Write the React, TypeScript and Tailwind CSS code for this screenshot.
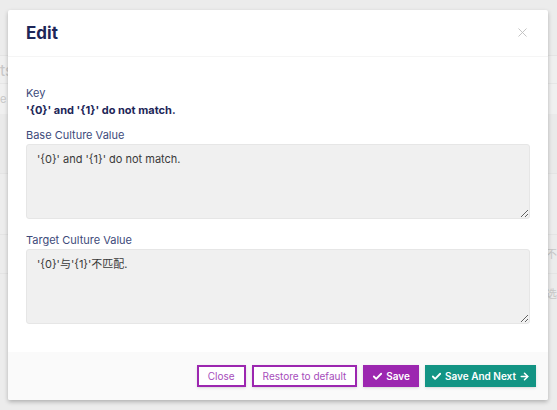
import { Check, ArrowRight, X } from "lucide-react";

const font = { fontFamily: "Inter, 'Noto Sans CJK SC', sans-serif" };

function Field({ label, value }: { label: string; value: string }) {
  return (
    <div className="flex flex-col">
      <label className="mb-[2px] text-[11px] leading-[14px] text-[#3d4a7a]">{label}</label>
      <textarea
        readOnly
        defaultValue={value}
        className="h-[75px] w-full resize-y rounded-[3px] border border-[#e6e6e6] bg-[#f0f0f0] px-[10px] py-[6px] text-[11px] leading-[16px] text-[#3a3a3a] outline-none"
        style={font}
      />
    </div>
  );
}

export default function App() {
  return (
    <div className="relative h-[410px] w-[557px] overflow-hidden bg-[#ececec]" style={font}>
      {/* page behind the modal */}
      <div className="flex flex-col pt-[24px] text-[#c8c8c8]">
        <div className="h-[32px] border-b border-[#e4e4e4]" />
        <div className="flex h-[28px] items-center border-b border-[#e6e6e6] bg-[#efefef] text-[16px]">
          <span>ts</span>
        </div>
        <div className="flex h-[30px] items-center bg-[#f0f0f0] text-[11px]">
          <span>e</span>
        </div>
        <div className="h-[60px] border-b border-[#e4e4e4] bg-[#eaeaea]" />
        <div className="h-[60px] bg-[#ededed]" />
        <div className="flex h-[40px] items-center justify-end border-y border-[#e4e4e4] text-[11px]">
          <span>不</span>
        </div>
        <div className="flex h-[40px] items-center justify-end text-[11px]">
          <span>选</span>
        </div>
      </div>

      {/* modal */}
      <div className="absolute left-[8px] top-[10px] flex h-[390px] w-[540px] flex-col rounded-[2px] bg-white shadow-[0_2px_4px_rgba(0,0,0,0.25)]">
        <div className="flex h-[47px] items-center justify-between border-b border-[#f5f5f5] pl-[18px] pr-[18px]">
          <h2 className="mt-[1px] text-[17px] font-bold leading-none text-[#1d2658]">Edit</h2>
          <X className="-mt-[2px] h-[15px] w-[15px] text-[#bdbdbd]" strokeWidth={1.4} />
        </div>

        <div className="flex flex-1 flex-col px-[18px] pt-[29px]">
          <div className="text-[11px] leading-[14px] text-[#3d4a7a]">Key</div>
          <div className="mt-[3px] text-[11px] font-bold leading-[14px] text-[#1d2658]">
            '{"{0}"}' and '{"{1}"}' do not match.
          </div>
          <div className="mt-[11px] flex flex-col gap-[14px]">
            <Field label="Base Culture Value" value={"'{0}' and '{1}' do not match."} />
            <Field label="Target Culture Value" value={"'{0}'与'{1}'不匹配."} />
          </div>
        </div>

        <div className="flex h-[48px] items-center justify-end gap-[6px] rounded-b-[2px] bg-[#fafafa] pr-[12px]">
          <button className="h-[22px] border-2 border-[#9c27b0] bg-white px-[9px] text-[10px] text-[#a64dbb] shadow-sm">
            Close
          </button>
          <button className="h-[22px] border-2 border-[#9c27b0] bg-white px-[9px] text-[10px] text-[#a64dbb] shadow-sm">
            Restore to default
          </button>
          <button className="flex h-[22px] items-center gap-[3px] bg-[#9c27b0] px-[9px] text-[10px] font-semibold text-white shadow-sm">
            <Check className="h-[11px] w-[11px]" strokeWidth={4} />
            Save
          </button>
          <button className="flex h-[22px] items-center gap-[3px] bg-[#139484] px-[6px] text-[10px] font-semibold text-white shadow-sm">
            <Check className="h-[11px] w-[11px]" strokeWidth={4} />
            Save And Next
            <ArrowRight className="h-[11px] w-[11px]" strokeWidth={3.5} />
          </button>
        </div>
      </div>
    </div>
  );
}
